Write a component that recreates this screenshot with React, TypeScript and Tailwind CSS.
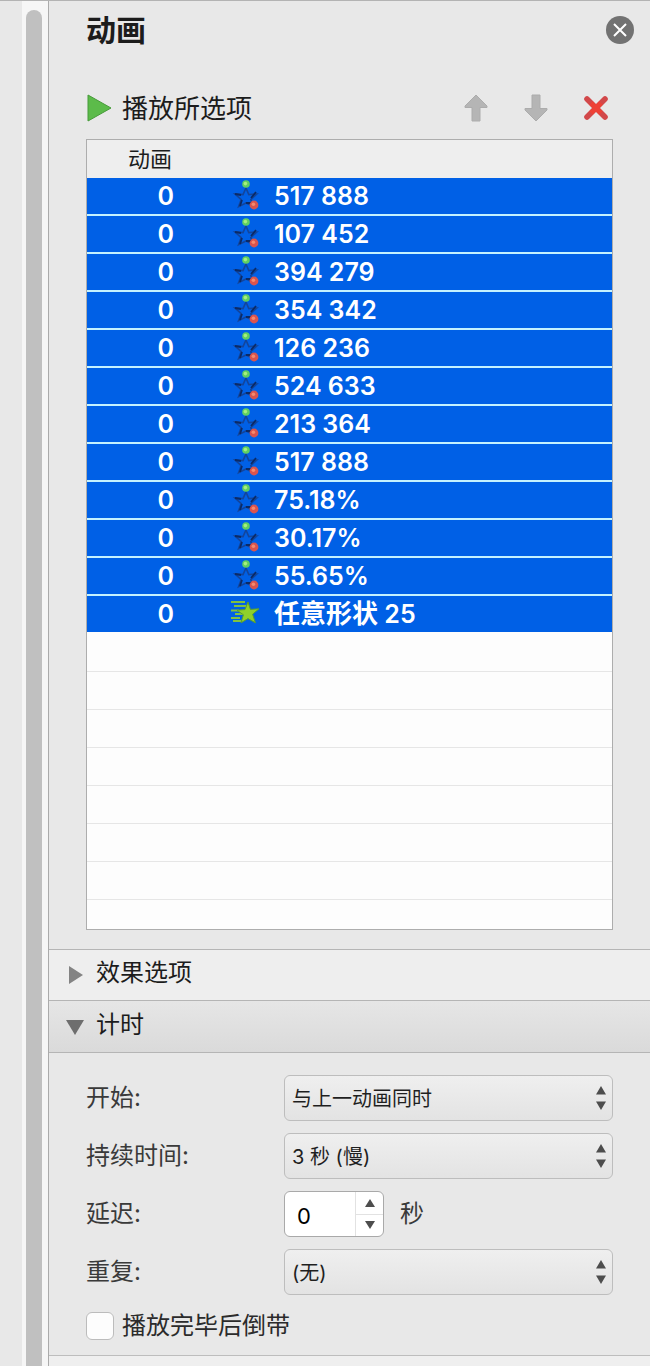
import { useState } from "react";

type Effect = "motion" | "fly";

interface AnimationItem {
  id: number;
  order: number;
  effect: Effect;
  name: string;
  suffix?: string;
}

const items: AnimationItem[] = [
  { id: 1, order: 0, effect: "motion", name: "517 888" },
  { id: 2, order: 0, effect: "motion", name: "107 452" },
  { id: 3, order: 0, effect: "motion", name: "394 279" },
  { id: 4, order: 0, effect: "motion", name: "354 342" },
  { id: 5, order: 0, effect: "motion", name: "126 236" },
  { id: 6, order: 0, effect: "motion", name: "524 633" },
  { id: 7, order: 0, effect: "motion", name: "213 364" },
  { id: 8, order: 0, effect: "motion", name: "517 888" },
  { id: 9, order: 0, effect: "motion", name: "75.18%" },
  { id: 10, order: 0, effect: "motion", name: "30.17%" },
  { id: 11, order: 0, effect: "motion", name: "55.65%" },
  { id: 12, order: 0, effect: "fly", name: "任意形状", suffix: "25" },
];

const emptyRows = [1, 2, 3, 4, 5, 6, 7];

function MotionIcon() {
  return (
    <svg width="32" height="36" viewBox="0 0 32 36" aria-hidden="true">
      <path
        d="M16 10l2.8 6.6 8-.6-6 5.6 3 7-7.8-3.6-7.4 3.6 2.6-7-6.2-5.6 8 .6z"
        fill="none"
        stroke="#12459c"
        strokeWidth="1.6"
      />
      <path d="M5 16l6 1M21 20l5-6M12 22l-2 6M16 25h5" stroke="#0b2a66" strokeWidth="1.8" />
      <circle cx="16" cy="6" r="3.8" fill="#5fcf62" />
      <circle cx="15.4" cy="5.6" r="1.8" fill="#a6ee7e" />
      <circle cx="24" cy="27" r="4.4" fill="#d9544e" />
      <circle cx="23.4" cy="26.2" r="1.8" fill="#f58a6c" />
    </svg>
  );
}

function FlyIcon() {
  return (
    <svg width="32" height="36" viewBox="0 0 32 36" aria-hidden="true">
      <path d="M1 6h14M4 10h12M1 14.5h8M5 18h8M1 22h9M3 25h8" stroke="#7fc241" strokeWidth="2" />
      <path
        d="M18 6l2.4 7.4 8.6-.6-6.4 5.4 2.8 8.6-7.4-4.2-7 4.2 2.4-8-6.4-4.6 8-.6z"
        fill="#8fd02c"
        stroke="#5aa02c"
        strokeWidth="1"
      />
    </svg>
  );
}

function ArrowIcon({ down }: { down?: boolean }) {
  return (
    <svg
      width="24"
      height="28"
      viewBox="0 0 24 28"
      className={down ? "rotate-180" : ""}
      aria-hidden="true"
    >
      <path d="M12 1l11 11v1.5h-7V27H8V13.5H1V12z" fill="#b5b5b5" stroke="#acacac" />
    </svg>
  );
}

function StepArrows() {
  return (
    <svg
      width="10"
      height="24"
      viewBox="0 0 10 24"
      className="pointer-events-none absolute right-[7px] top-[11px]"
      aria-hidden="true"
    >
      <path d="M5 0l5 8.5H0zM5 24l5-8.5H0z" fill="#4d4d4d" />
    </svg>
  );
}

interface SelectRowProps {
  id: string;
  label: string;
  options: string[];
}

function SelectRow({ id, label, options }: SelectRowProps) {
  return (
    <div className="flex h-[46px] items-center">
      <label htmlFor={id} className="w-[198px] shrink-0 text-2xl text-[#3a3a3a]">
        {label}
      </label>
      <div className="relative flex-1">
        <select
          id={id}
          className="block h-[46px] w-full appearance-none rounded-md border border-[#bdbdbd] bg-linear-to-b from-[#efefef] to-[#e3e3e3] pl-[7px] pr-6 pt-0.5 text-xl text-[#1f1f1f]"
        >
          {options.map((option) => (
            <option key={option}>{option}</option>
          ))}
        </select>
        <StepArrows />
      </div>
    </div>
  );
}

export default function App() {
  const [delay, setDelay] = useState(0);
  const [rewind, setRewind] = useState(false);

  return (
    <div className="flex min-h-screen border-t border-[#b3b3b3] bg-[#e8e8e8] font-[Inter,'Noto_Sans_CJK_SC',sans-serif] text-[#1c1c1c]">
      <div className="flex w-[49px] shrink-0 justify-end border-r border-[#ababab]">
        <div className="flex w-[26px] bg-[#f6f6f6] pl-1 pt-[9px]">
          <div className="w-4 rounded-t-full bg-[#c0c0c0]" />
        </div>
      </div>

      <aside className="flex min-w-0 flex-1 flex-col">
        <header className="flex h-[58px] items-center justify-between pl-[37px] pr-4">
          <h1 className="text-3xl font-bold">动画</h1>
          <button
            aria-label="关闭"
            className="flex size-7 items-center justify-center rounded-full bg-[#727272]"
          >
            <svg width="14" height="14" viewBox="0 0 14 14" aria-hidden="true">
              <path d="M1 1l12 12M13 1L1 13" stroke="#fff" strokeWidth="2" />
            </svg>
          </button>
        </header>

        <div className="mt-[19px] flex h-[60px] items-center justify-between pl-[38px] pr-[42px] mb-px">
          <button className="flex items-center gap-2.5 text-[26px]">
            <svg width="25" height="28" viewBox="0 0 25 28" aria-hidden="true">
              <path d="M1 1l23 13L1 27z" fill="#5cbb4a" stroke="#479b3a" />
            </svg>
            播放所选项
          </button>
          <div className="flex items-center gap-9">
            <button aria-label="上移">
              <ArrowIcon />
            </button>
            <button aria-label="下移">
              <ArrowIcon down />
            </button>
            <button aria-label="删除">
              <svg width="24" height="24" viewBox="0 0 24 24" aria-hidden="true">
                <path d="M3 3l18 18M21 3L3 21" stroke="#d2484a" strokeWidth="5.6" strokeLinecap="round" />
                <path d="M7 7l10 10M17 7L7 17" stroke="#ee4136" strokeWidth="4.6" />
              </svg>
            </button>
          </div>
        </div>

        <div className="mx-[37px] mb-[19px] border border-[#adadad] bg-[#fdfdfd] pb-[29px]">
          <table className="w-full table-fixed border-separate border-spacing-0">
            <colgroup>
              <col className="w-[87px]" />
              <col className="w-[100px]" />
              <col />
            </colgroup>
            <thead>
              <tr className="h-[38px] bg-[#eeeeee]">
                <th colSpan={3} className="p-0 pl-[41px] text-left text-[22px] font-normal leading-8">
                  动画
                </th>
              </tr>
            </thead>
            <tbody>
              {items.map((item) => (
                <tr
                  key={item.id}
                  className="h-[38px] bg-[#0060e6] text-[25px] font-semibold text-white *:border-b-2 *:border-[#c4f2ff] last:*:border-[#fdfdfd]"
                >
                  <td className="p-0 text-right leading-9">{item.order}</td>
                  <td className="p-0">
                    <div className="flex justify-end pr-3">
                      {item.effect === "motion" ? <MotionIcon /> : <FlyIcon />}
                    </div>
                  </td>
                  <td className="p-0 leading-9">
                    {item.suffix ? (
                      <>
                        <span className="text-[26px] leading-9">{item.name}</span> {item.suffix}
                      </>
                    ) : (
                      item.name
                    )}
                  </td>
                </tr>
              ))}
            </tbody>
          </table>
          {emptyRows.map((row) => (
            <div key={row} className="h-[38px] border-b border-[#e6e6e6]" />
          ))}
        </div>

        <button className="flex h-[51px] items-center gap-3 border-t border-[#b5b5b5] bg-[#eeeeee] pb-1 pl-[19px] text-2xl">
          <svg width="16" height="18" viewBox="0 0 16 18" className="mt-1" aria-hidden="true">
            <path d="M1 0l14 9L1 18z" fill="#838383" />
          </svg>
          效果选项
        </button>
        <button className="flex h-[52px] items-center gap-3 border-t border-[#b5b5b5] bg-linear-to-b from-[#e6e6e6] to-[#dadada] pb-1 pl-[17px] text-2xl">
          <svg width="18" height="16" viewBox="0 0 18 16" className="mt-1" aria-hidden="true">
            <path d="M0 1h18L9 16z" fill="#6e6e6e" />
          </svg>
          计时
        </button>

        <div className="flex flex-col gap-3 border-t border-[#b5b5b5] pb-[14px] pl-[37px] pr-[37px] pt-[22px]">
          <SelectRow id="start" label="开始:" options={["与上一动画同时", "单击时", "上一动画之后"]} />
          <SelectRow id="duration" label="持续时间:" options={["3 秒 (慢)", "2 秒 (中)", "1 秒 (快)"]} />

          <div className="flex h-[46px] items-center">
            <label htmlFor="delay" className="w-[198px] shrink-0 text-2xl text-[#3a3a3a]">
              延迟:
            </label>
            <div className="flex h-[46px] w-[100px] overflow-hidden rounded-md border border-[#a9a9a9] bg-white">
              <input
                id="delay"
                type="text"
                value={delay}
                onChange={(e) => setDelay(Number(e.target.value.replace(/\D/g, "")))}
                className="w-[70px] pl-3 pt-1 text-[22px] text-black outline-none"
              />
              <div className="flex flex-1 flex-col border-l border-[#e2e2e2]">
                <button
                  aria-label="增加"
                  onClick={() => setDelay(delay + 1)}
                  className="flex flex-1 items-center justify-center border-b border-[#e2e2e2]"
                >
                  <svg width="10" height="8" viewBox="0 0 10 8" aria-hidden="true">
                    <path d="M5 0l5 8H0z" fill="#4d4d4d" />
                  </svg>
                </button>
                <button
                  aria-label="减少"
                  onClick={() => setDelay(Math.max(0, delay - 1))}
                  className="flex flex-1 items-center justify-center"
                >
                  <svg width="10" height="8" viewBox="0 0 10 8" aria-hidden="true">
                    <path d="M5 8l5-8H0z" fill="#4d4d4d" />
                  </svg>
                </button>
              </div>
            </div>
            <span className="pl-4 text-2xl text-[#3a3a3a]">秒</span>
          </div>

          <SelectRow id="repeat" label="重复:" options={["(无)", "2", "3", "直到下一次单击"]} />

          <label className="mt-1 flex h-[30px] items-center gap-2 text-2xl text-[#2b2b2b]">
            <input
              type="checkbox"
              checked={rewind}
              onChange={(e) => setRewind(e.target.checked)}
              className="size-7 appearance-none rounded-md border border-[#bcbcbc] bg-[#fdfdfd] checked:bg-[#0060e6]"
            />
            播放完毕后倒带
          </label>
        </div>

        <div className="flex-1 border-t border-[#bdbdbd] bg-[#efefef]" />
      </aside>
    </div>
  );
}
